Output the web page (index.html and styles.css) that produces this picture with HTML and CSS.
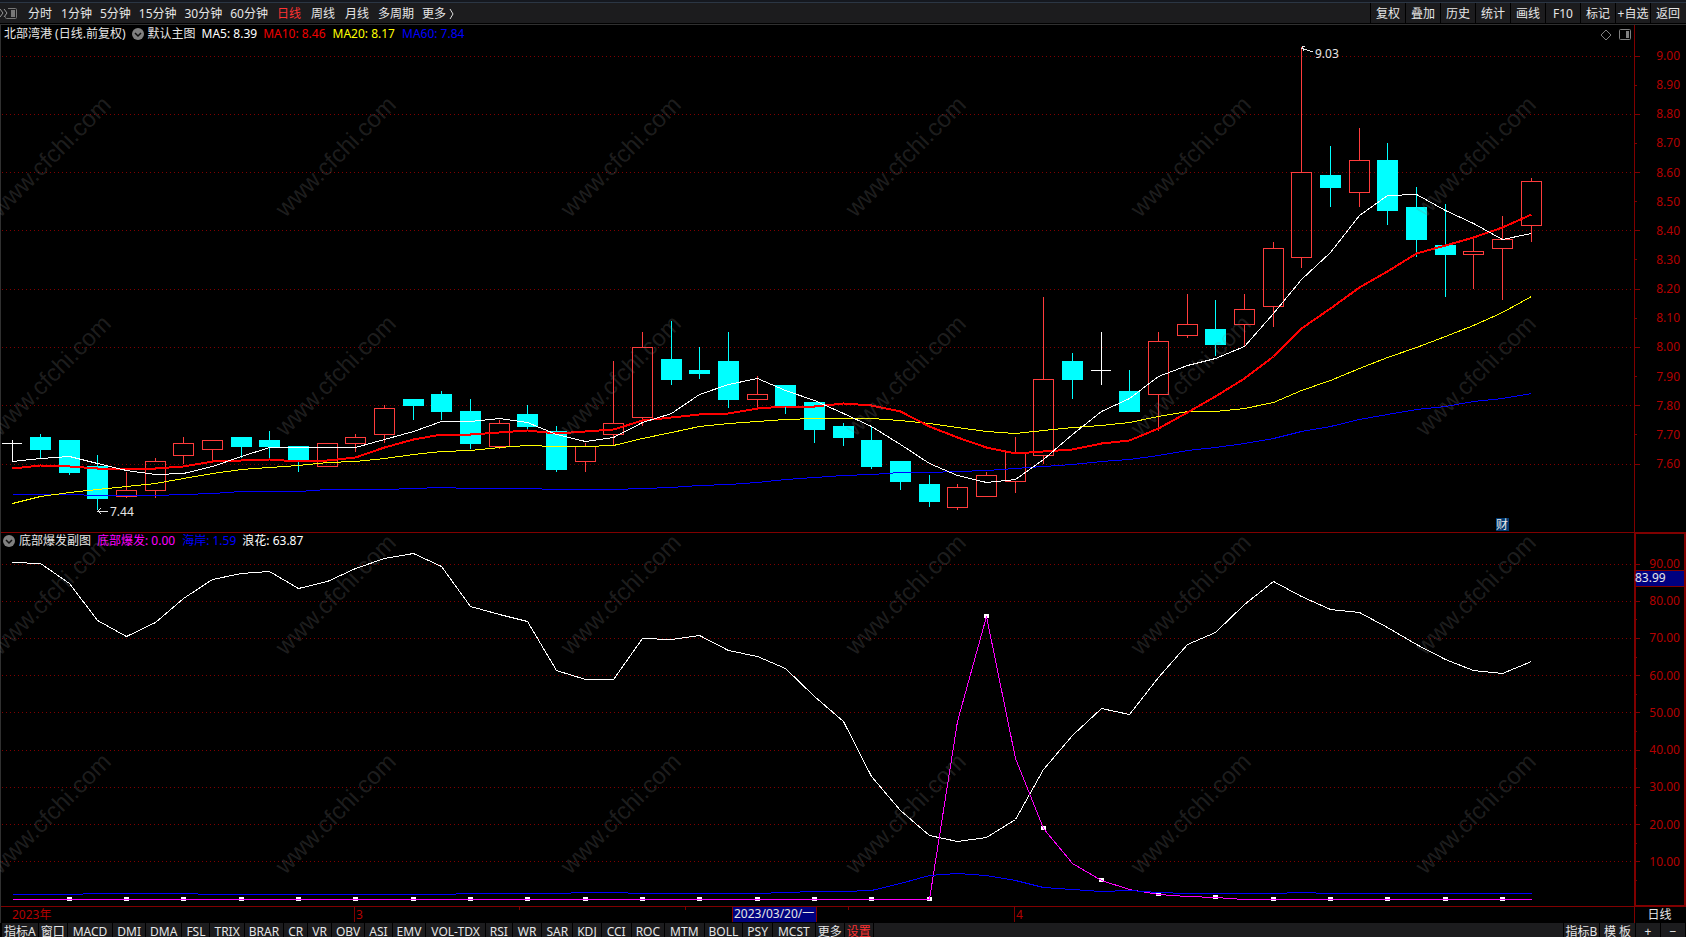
FILE: index.html
```
<!DOCTYPE html>
<html lang="zh-CN">
<head>
<meta charset="utf-8">
<meta name="viewport" content="width=device-width, initial-scale=1.0">
<title>北部湾港 日线</title>
<link rel="stylesheet" href="styles.css">
</head>

<body>
<div class="app">
    <nav class="toolbar">
        <button class="dock" aria-label="侧栏">
            <svg width="18" height="14" viewBox="0 0 18 14">
                <path d="M0 2l3 4-3 4M4 2l3 4-3 4" fill="none" stroke="#9a9a9a"/>
                <path d="M8 1.500h7.500a1 1 0 0 1 1 1v8a1 1 0 0 1-1 1H6.500a1 1 0 0 1-1-1V9.500" fill="none" stroke="#777"/>
                <rect x="11" y="3" width="4" height="7" fill="#777"/>
            </svg>
        </button>
        <div class="periods">
            <button>分时</button>
            <button class="mins">1分钟</button>
            <button class="mins">5分钟</button>
            <button class="mins">15分钟</button>
            <button class="mins">30分钟</button>
            <button class="mins">60分钟</button>
            <button class="active">日线</button>
            <button>周线</button>
            <button>月线</button>
            <button class="mins">多周期</button>
            <button class="mins">更多 <svg width="6" height="12" viewBox="0 0 6 12"><path d="M1 1l3 5-3 5" fill="none" stroke="#ddd"/></svg></button>
        </div>
        <div class="tools">
            <button>复权</button>
            <button>叠加</button>
            <button>历史</button>
            <button>统计</button>
            <button>画线</button>
            <button>F10</button>
            <button>标记</button>
            <button>+自选</button>
            <button>返回</button>
        </div>
    </nav>

    <section class="pane pane-main">
        <svg class="chart" id="mainChart" role="img" aria-label="K线图"></svg>
        <header class="legend">
            <span class="stock">北部湾港 (日线.前复权)</span>
            <button class="chev" aria-label="切换主图">
                <svg width="12" height="12" viewBox="0 0 12 12"><circle cx="6" cy="6" r="6" fill="#808080"/><path d="M3 5l3 3 3-3" fill="none" stroke="#111" stroke-width="1.500"/></svg>
            </button>
            <span>默认主图</span>
            <span class="ma5">MA5: 8.39</span>
            <span class="ma10">MA10: 8.46</span>
            <span class="ma20">MA20: 8.17</span>
            <span class="ma60">MA60: 7.84</span>
        </header>
        <div class="corner">
            <svg width="12" height="12" viewBox="0 0 12 12"><path d="M6 1l5 5-5 5-5-5z" fill="none" stroke="#808080"/></svg>
            <svg width="12" height="12" viewBox="0 0 12 12"><rect x="0.500" y="0.500" width="11" height="10" rx="1" fill="none" stroke="#808080"/><rect x="7" y="2" width="3" height="7" fill="#808080"/></svg>
        </div>
    </section>

    <section class="pane pane-sub">
        <svg class="chart" id="subChart" role="img" aria-label="底部爆发副图"></svg>
        <header class="legend">
            <button class="chev" aria-label="切换副图">
                <svg width="12" height="12" viewBox="0 0 12 12"><circle cx="6" cy="6" r="6" fill="#808080"/><path d="M3 5l3 3 3-3" fill="none" stroke="#111" stroke-width="1.500"/></svg>
            </button>
            <span>底部爆发副图</span>
            <span class="burst">底部爆发: 0.00</span>
            <span class="coast">海岸: 1.59</span>
            <span class="wave">浪花: 63.87</span>
        </header>
    </section>

    <div class="dates">
        <svg class="date-axis" id="dateAxis" role="img" aria-label="日期"></svg>
        <div class="period-name">日线</div>
    </div>

    <nav class="tabs">
        <button class="tight">指标A</button>
        <button class="tight">窗口</button>
        <button class="wide">MACD</button>
        <button>DMI</button>
        <button>DMA</button>
        <button>FSL</button>
        <button>TRIX</button>
        <button>BRAR</button>
        <button>CR</button>
        <button>VR</button>
        <button>OBV</button>
        <button>ASI</button>
        <button>EMV</button>
        <button class="wide">VOL-TDX</button>
        <button>RSI</button>
        <button class="wide">WR</button>
        <button>SAR</button>
        <button>KDJ</button>
        <button class="wide">CCI</button>
        <button>ROC</button>
        <button class="wide">MTM</button>
        <button>BOLL</button>
        <button>PSY</button>
        <button class="wide">MCST</button>
        <button class="tight">更多</button>
        <button class="tight active">设置</button>
        <div class="filler"></div>
        <button class="tpl">指标B</button>
        <button class="tpl">模 板</button>
        <button class="zoom" aria-label="放大">+</button>
        <button class="zoom" aria-label="缩小">−</button>
    </nav>

    <svg class="watermark" id="watermark" aria-hidden="true"></svg>
</div>
<script src="chart.js"></script>
</body>
</html>
```
FILE: styles.css
```
* {
    box-sizing: border-box;
}
body {
    margin: 0;
    background: #000;
    color: #e6e6e6;
    font-family: "Noto Sans", "Noto Sans CJK SC", sans-serif;
    font-size: 12px;
    line-height: 16px;
    overflow: hidden;
}
button {
    margin: 0;
    padding: 0;
    border: 0;
    background: none;
    color: inherit;
    font: inherit;
    white-space: nowrap;
    cursor: pointer;
}
svg {
    display: block;
}
.app {
    position: relative;
    display: flex;
    flex-direction: column;
    height: 100vh;
    border-top: 2px solid #15181f;
}

/* top toolbar */
.toolbar {
    display: flex;
    align-items: stretch;
    height: 23px;
    flex: none;
    padding-right: 1px;
    border-top: 1px solid #2b3644;
    border-bottom: 1px solid #303030;
    background: #1c1c1e;
    box-shadow: inset 0 -1px #000;
}
.dock {
    width: 23px;
}
.periods {
    display: flex;
    flex: 1;
}
.periods button {
    padding: 0 5px;
}
.periods .mins {
    padding: 0 4px;
}
.periods svg {
    display: inline-block;
    vertical-align: middle;
}
.tools {
    display: flex;
}
.tools button {
    width: 35px;
    border-left: 1px solid #000;
}
.active {
    color: #ff3232;
}

/* chart panes */
.pane {
    position: relative;
    min-height: 0;
    border-left: 1px solid #303030;
}
.pane-main {
    flex: 508 1 0;
}
.pane-sub {
    flex: 374 1 0;
}
.chart {
    width: 100%;
    height: 100%;
    position: absolute;
    shape-rendering: crispEdges;
}
.legend {
    position: absolute;
    top: 0;
    left: 3px;
    display: flex;
    align-items: center;
    gap: 6px;
    height: 17px;
    white-space: nowrap;
}
.pane-sub .legend {
    left: 2px;
    height: 15px;
}
.chev + span {
    margin-left: -2px;
}
.ma5, .wave {
    color: #fff;
}
.ma10 {
    color: #f00000;
}
.ma20 {
    margin-left: 1px;
    color: #ffff00;
}
.ma60, .coast {
    margin-left: 1px;
    color: #0000ff;
}
.burst {
    color: #ff00ff;
}
.corner {
    position: absolute;
    top: 4px;
    right: 55px;
    display: flex;
    gap: 7px;
}

/* date row */
.dates {
    display: flex;
    flex: none;
    height: 16px;
    border-left: 1px solid #303030;
}
.date-axis {
    flex: 1;
    min-width: 0;
    height: 16px;
    overflow: visible;
    shape-rendering: crispEdges;
}
.period-name {
    width: 52px;
    padding-right: 2px;
    border-left: 1px solid #800000;
    text-align: center;
}

/* indicator tabs */
.tabs {
    display: flex;
    flex: none;
    gap: 1px;
    height: 14px;
    padding: 0 1px 0 2px;
    overflow: hidden;
}
.tabs button {
    height: 17px;
    padding: 0 4px;
    background: #1c1c1e;
}
.tabs .tight {
    padding: 0 2px;
}
.tabs .wide {
    padding: 0 5px;
}
.tabs .tpl {
    width: 35px;
    padding: 0;
}
.tabs .zoom {
    width: 24px;
    padding: 0;
}
.filler {
    flex: 1;
    background: #1c1c1e;
}

/* svg parts */
.chart text, .date-axis text {
    font-size: 12px;
    fill: #b40000;
}
.grid {
    stroke: #800000;
    stroke-dasharray: 1 3;
}
.frame {
    stroke: #800000;
    fill: none;
}
.thick {
    stroke-width: 2;
}
.line {
    fill: none;
}
.chart .note, .date-axis .note {
    fill: #e6e6e6;
}
.watermark {
    position: absolute;
    top: 0;
    left: 0;
    width: 100%;
    height: 100%;
    pointer-events: none;
    font-family: "Liberation Sans", Arial, sans-serif;
    font-size: 24px;
    fill: rgba(128, 128, 128, 0.24);
}
```
FILE: chart.js
```
// open, high, low, close
const bars = [
    [7.67, 7.68, 7.61, 7.67], [7.69, 7.70, 7.62, 7.65], [7.68, 7.68, 7.56, 7.57],
    [7.59, 7.63, 7.44, 7.48], [7.49, 7.57, 7.48, 7.51], [7.51, 7.62, 7.48, 7.61],
    [7.63, 7.69, 7.60, 7.67], [7.65, 7.68, 7.61, 7.68], [7.69, 7.69, 7.62, 7.66],
    [7.68, 7.71, 7.62, 7.66], [7.66, 7.66, 7.57, 7.61], [7.59, 7.67, 7.59, 7.67],
    [7.67, 7.70, 7.64, 7.69], [7.70, 7.80, 7.67, 7.79], [7.82, 7.82, 7.75, 7.80],
    [7.84, 7.85, 7.75, 7.78], [7.78, 7.82, 7.65, 7.67], [7.66, 7.75, 7.65, 7.74],
    [7.77, 7.80, 7.71, 7.73], [7.71, 7.73, 7.57, 7.58], [7.61, 7.67, 7.57, 7.66],
    [7.70, 7.95, 7.66, 7.74], [7.76, 8.05, 7.73, 8.00], [7.96, 8.09, 7.87, 7.89],
    [7.92, 8.00, 7.89, 7.91], [7.95, 8.05, 7.79, 7.82], [7.82, 7.90, 7.79, 7.84],
    [7.87, 7.87, 7.77, 7.80], [7.81, 7.81, 7.67, 7.72], [7.73, 7.74, 7.66, 7.69],
    [7.68, 7.73, 7.58, 7.59], [7.61, 7.61, 7.51, 7.54], [7.53, 7.56, 7.45, 7.47],
    [7.45, 7.53, 7.44, 7.52], [7.49, 7.57, 7.49, 7.56], [7.54, 7.69, 7.50, 7.64],
    [7.63, 8.17, 7.60, 7.89], [7.95, 7.98, 7.82, 7.89], [7.92, 8.05, 7.87, 7.92],
    [7.85, 7.92, 7.78, 7.78], [7.84, 8.05, 7.71, 8.02], [8.04, 8.18, 8.03, 8.08],
    [8.06, 8.16, 7.97, 8.01], [8.08, 8.18, 8.00, 8.13], [8.14, 8.36, 8.07, 8.34],
    [8.31, 9.03, 8.27, 8.60], [8.59, 8.69, 8.48, 8.55], [8.53, 8.75, 8.48, 8.64],
    [8.64, 8.70, 8.42, 8.47], [8.48, 8.55, 8.31, 8.37], [8.35, 8.49, 8.17, 8.32],
    [8.32, 8.38, 8.20, 8.33], [8.34, 8.45, 8.16, 8.37], [8.42, 8.58, 8.36, 8.57]
];

// averages of the bars whose window starts before the first visible one
const ma5Head = [7.610, 7.620, 7.627, 7.603];
const ma10Head = [7.585, 7.594, 7.593, 7.586, 7.585, 7.586, 7.593, 7.610, 7.613];
const ma20Head = [7.466, 7.487, 7.502, 7.514, 7.523, 7.534, 7.550, 7.567, 7.581, 7.589,
    7.596, 7.604, 7.610, 7.620, 7.633, 7.643, 7.648, 7.657, 7.665];
const ma60 = [7.495, 7.495, 7.495, 7.493, 7.492, 7.492, 7.497, 7.500, 7.504, 7.507, 7.507,
    7.511, 7.511, 7.514, 7.517, 7.521, 7.517, 7.517, 7.517, 7.511, 7.511, 7.513, 7.516,
    7.521, 7.527, 7.531, 7.538, 7.547, 7.552, 7.561, 7.565, 7.571, 7.572, 7.573, 7.578,
    7.583, 7.590, 7.600, 7.609, 7.617, 7.628, 7.645, 7.655, 7.672, 7.689, 7.710, 7.727,
    7.752, 7.770, 7.787, 7.797, 7.813, 7.824, 7.841];

const wave = [90.5, 90.2, 84.8, 74.9, 70.5, 74.4, 80.8, 85.9, 87.5, 87.9, 83.3, 85.4, 88.7,
    91.5, 92.7, 89.4, 78.5, 76.5, 74.6, 61.3, 58.9, 58.9, 69.9, 69.6, 70.7, 66.7, 65.1,
    61.8, 54.3, 47.6, 33.0, 23.8, 17.0, 15.4, 16.5, 21.3, 34.7, 43.9, 51.1, 49.7, 59.6,
    68.5, 71.5, 79.0, 85.3, 81.3, 77.7, 76.9, 72.9, 68.3, 64.3, 61.4, 60.6, 63.87];
const coast = [1.1, 1.1, 1.1, 1.4, 1.4, 1.4, 1.4, 1.1, 1.1, 1.1, 1.1, 1.1, 1.1, 1.1, 1.1,
    1.1, 1.4, 1.4, 1.4, 1.6, 1.8, 1.8, 1.6, 1.6, 1.6, 1.6, 1.6, 1.8, 1.9, 2.1, 2.4, 4.1,
    6.2, 6.8, 6.2, 4.9, 3.0, 2.5, 2.0, 2.2, 1.8, 1.5, 1.5, 1.5, 1.5, 1.8, 1.6, 1.6, 1.5,
    1.5, 1.5, 1.6, 1.6, 1.59];
const burst = new Array(bars.length).fill(0);
[47.6, 75.9, 37.7, 19, 9.5, 5, 2.5, 1.2, 0.7, 0.4].forEach((v, i) => burst[33 + i] = v);

const AXIS = 52;
const UP = '#ff3c3c';
const DOWN = '#00ffff';

function average(n, head) {
    return bars.map((b, i) => {
        if (i < n - 1) return head[i];
        let sum = 0;
        for (let k = i - n + 1; k <= i; k++) sum += bars[k][3];
        return sum / n;
    });
}

// centre of a pixel, keeps 1px strokes sharp
function px(v) {
    return Math.floor(v) + 0.5;
}

function el(svg, tag, attrs, text) {
    const node = document.createElementNS('http://www.w3.org/2000/svg', tag);
    for (const key in attrs) node.setAttribute(key, attrs[key]);
    if (text) node.textContent = text;
    svg.appendChild(node);
    return node;
}

function hline(svg, x1, x2, y, cls) {
    el(svg, 'line', { x1: x1, x2: x2, y1: px(y), y2: px(y), class: cls });
}

function vline(svg, x, y1, y2, cls) {
    el(svg, 'line', { x1: px(x), x2: px(x), y1: y1, y2: y2, class: cls });
}

function barX(plotW, i) {
    return Math.floor(11 + i * (plotW - 114) / (bars.length - 1));
}

function curve(svg, plotW, values, y, color, width) {
    const points = values.map((v, i) => px(barX(plotW, i)) + ',' + px(y(v))).join(' ');
    el(svg, 'polyline', { points: points, class: 'line', stroke: color, 'stroke-width': width || 1 });
}

function drawMain() {
    const svg = document.getElementById('mainChart');
    const w = svg.clientWidth, h = svg.clientHeight;
    const plotW = w - AXIS;
    const y = p => 31 + (9 - p) * (h - 100) / 1.4;
    svg.textContent = '';

    for (let n = 90; n >= 76; n--) {
        const ty = y(n / 10);
        const major = n % 2 === 0;
        if (major) hline(svg, 1, plotW, ty, 'grid');
        hline(svg, plotW, plotW + (major ? 6 : 3), ty, 'frame');
        el(svg, 'text', { x: w - 6, y: Math.round(ty) + 4, 'text-anchor': 'end' }, (n / 10).toFixed(2));
    }
    vline(svg, plotW, 0, h, 'frame');
    hline(svg, 0, w, h - 1, 'frame');

    bars.forEach(([open, high, low, close], i) => {
        const x = barX(plotW, i);
        const top = Math.floor(y(Math.max(open, close)));
        const bottom = Math.floor(y(Math.min(open, close)));
        const yHigh = Math.floor(y(high)), yLow = Math.floor(y(low));
        if (open === close) {
            el(svg, 'rect', { x: x, y: yHigh, width: 1, height: yLow - yHigh, fill: '#fff' });
            el(svg, 'rect', { x: x - 10, y: top, width: 20, height: 1, fill: '#fff' });
        } else if (close < open) {
            el(svg, 'rect', { x: x, y: yHigh, width: 1, height: yLow - yHigh, fill: DOWN });
            el(svg, 'rect', { x: x - 10, y: top, width: 21, height: bottom - top + 1, fill: DOWN });
        } else {
            el(svg, 'rect', { x: x, y: yHigh, width: 1, height: top - yHigh, fill: UP });
            el(svg, 'rect', { x: x, y: bottom, width: 1, height: yLow - bottom, fill: UP });
            el(svg, 'rect', { x: px(x - 10), y: px(top), width: 20, height: bottom - top, fill: 'none', stroke: UP });
        }
    });

    curve(svg, plotW, ma60, y, '#0000ff');
    curve(svg, plotW, average(20, ma20Head), y, '#ffff00');
    curve(svg, plotW, average(10, ma10Head), y, '#ff0000', 2);
    curve(svg, plotW, average(5, ma5Head), y, '#ffffff');

    // highest and lowest price
    const hx = barX(plotW, 45), hy = Math.round(y(9.03)) + 1;
    el(svg, 'path', { d: `M${hx + 12} ${hy + 4}L${hx} ${hy}M${hx + 4} ${hy - 2}l-3 1 2 4`, class: 'line', stroke: '#e6e6e6' });
    el(svg, 'text', { x: hx + 14, y: hy + 10, class: 'note' }, '9.03');
    const lx = barX(plotW, 3), ly = Math.round(y(7.44));
    el(svg, 'path', { d: `M${lx + 11} ${ly}H${lx}M${lx + 4} ${ly - 3}l-3 3 3 3`, class: 'line', stroke: '#e6e6e6' });
    el(svg, 'text', { x: lx + 13, y: ly + 5, class: 'note' }, '7.44');

    // financial report mark
    const fx = barX(plotW, 52);
    el(svg, 'rect', { x: fx - 6, y: h - 15, width: 13, height: 13, fill: '#003870' });
    el(svg, 'text', { x: fx, y: h - 4, 'text-anchor': 'middle', class: 'note' }, '财');
}

function drawSub() {
    const svg = document.getElementById('subChart');
    const w = svg.clientWidth, h = svg.clientHeight;
    const plotW = w - AXIS;
    const y = v => h - 8 - v * (h - 39) / 90;
    svg.textContent = '';

    for (let v = 90; v > 0; v -= 5) {
        const major = v % 10 === 0;
        if (major) {
            hline(svg, 1, plotW, y(v), 'grid');
            el(svg, 'text', { x: w - 6, y: Math.round(y(v)) + 4, 'text-anchor': 'end' }, v.toFixed(2));
        }
        hline(svg, plotW, plotW + (major ? 6 : 3), y(v), 'frame');
    }
    hline(svg, 0, w, h - 1, 'frame');
    el(svg, 'rect', { x: plotW + 1, y: 0, width: AXIS - 2, height: h - 1, class: 'frame thick' });

    curve(svg, plotW, wave, y, '#ffffff');
    for (let i = 2; i < bars.length; i += 2) {
        el(svg, 'rect', { x: barX(plotW, i) - 2, y: Math.floor(y(burst[i])) - 2, width: 5, height: 4, fill: '#fff' });
    }
    curve(svg, plotW, burst, y, '#ff00ff');
    curve(svg, plotW, coast, y, '#0000ff');

    // value under the crosshair, the label stands on its level
    const cy = Math.round(y(83.99)) - 16;
    el(svg, 'rect', { x: plotW + 2, y: cy, width: AXIS - 4, height: 16, fill: '#000080' });
    hline(svg, plotW, w, cy, 'frame');
    hline(svg, plotW, w, cy + 16, 'frame');
    el(svg, 'text', { x: plotW + 1, y: cy + 12, class: 'note' }, '83.99');
}

function drawDates() {
    const svg = document.getElementById('dateAxis');
    const plotW = svg.clientWidth;
    const at = i => barX(plotW, i);
    svg.textContent = '';

    el(svg, 'text', { x: at(0), y: 12 }, '2023年');
    [[12, '3'], [35, '4']].forEach(([i, label]) => {
        vline(svg, at(i) - 1, 0, 15, 'frame');
        el(svg, 'text', { x: at(i) + 1, y: 12 }, label);
    });
    [17.7, 23.5, 29.2].forEach(i => vline(svg, at(i), 0, 3, 'frame'));

    const dx = at(25) + 4;
    el(svg, 'rect', { x: dx, y: 0, width: 85, height: 15, fill: '#000080' });
    vline(svg, dx, 0, 15, 'frame');
    vline(svg, dx + 84, 0, 15, 'frame');
    el(svg, 'text', { x: dx + 2, y: 11, class: 'note' }, '2023/03/20/一');
}

function drawWatermark() {
    const svg = document.getElementById('watermark');
    svg.textContent = '';
    for (let cy = 156; cy < svg.clientHeight; cy += 219) {
        for (let cx = 52; cx < svg.clientWidth - 100; cx += 285) {
            el(svg, 'text', {
                transform: `translate(${cx} ${cy}) rotate(-45)`,
                y: 6,
                'text-anchor': 'middle'
            }, 'www.cfchi.com');
        }
    }
}

function drawAll() {
    drawMain();
    drawSub();
    drawDates();
    drawWatermark();
}

drawAll();
window.addEventListener('resize', drawAll);
```
